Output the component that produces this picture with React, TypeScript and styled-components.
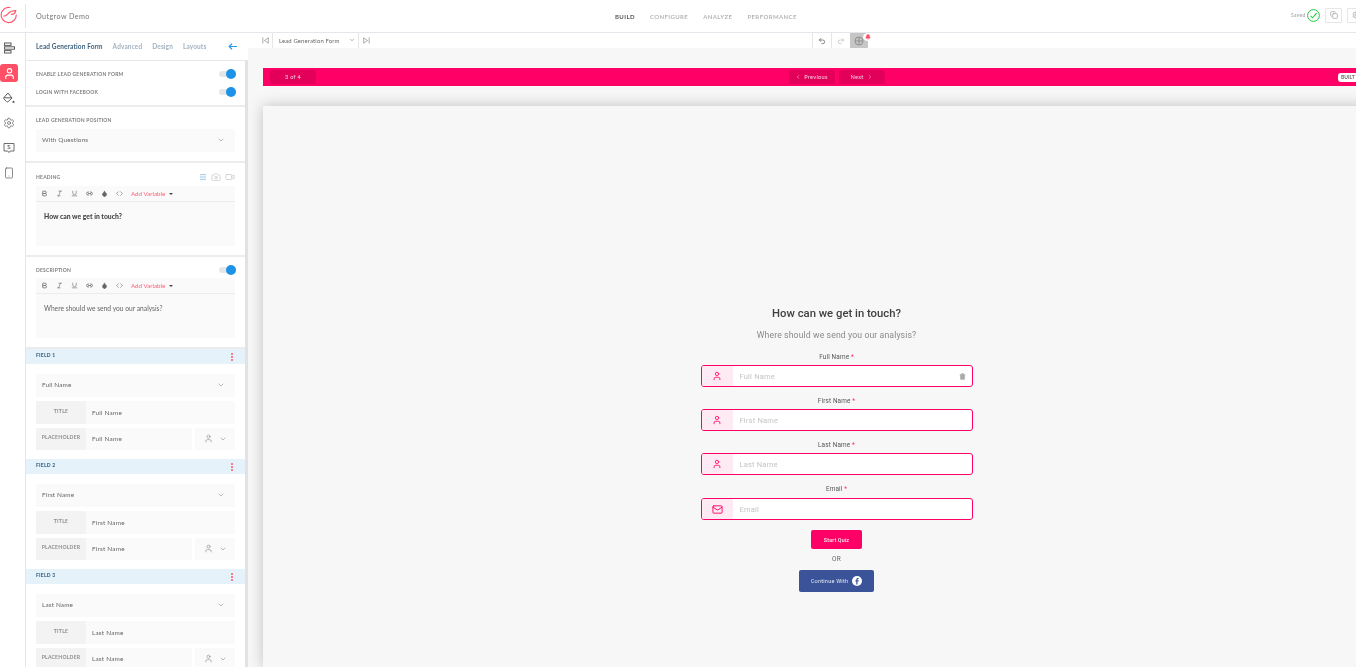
import React from "react";
import styled, { createGlobalStyle } from "styled-components";
import {
  Bell,
  Bold,
  Camera,
  ChevronDown,
  ChevronLeft,
  ChevronRight,
  Code,
  Copy,
  Droplet,
  Italic,
  Link2,
  Mail,
  Menu,
  Redo2,
  Settings,
  Smartphone,
  Trash2,
  Underline,
  Undo2,
  User,
  Video,
} from "lucide-react";

const GlobalStyle = createGlobalStyle`
  html, body {
    margin: 0;
    height: 100%;
    overflow: hidden;
    background: #fff;
    font-family: "Lato", "Liberation Sans", sans-serif;
  }
  * {
    box-sizing: border-box;
  }
`;

const Page = styled.div`
  width: 1356px;
  height: 667px;
  display: flex;
  flex-direction: column;
  overflow: hidden;
  will-change: transform;
`;

/* top header */
const Header = styled.header`
  height: 33px;
  flex: none;
  display: flex;
  align-items: center;
  background: #fff;
  border-bottom: 1px solid #e3e7ec;
`;

const Brand = styled.div`
  width: 615px;
  height: 100%;
  display: flex;
  align-items: center;
  flex: none;
`;

const LogoCell = styled.div`
  width: 26px;
  height: 24px;
  padding-bottom: 2px;
  display: flex;
  align-items: center;
  border-right: 1px solid #e6e6e6;
`;

const ProjectName = styled.span`
  margin-left: 10px;
  font-size: 7.2px;
  letter-spacing: 0.4px;
  color: #777;
`;

const Nav = styled.nav`
  display: flex;
  gap: 15px;
`;

const NavItem = styled.span<{ $active?: boolean }>`
  font-size: 6px;
  font-weight: 700;
  letter-spacing: 0.4px;
  color: ${(p) => (p.$active ? "#555" : "#b5b5b5")};
`;

const SaveArea = styled.div`
  margin-left: auto;
  margin-bottom: 2px;
  width: 65px;
  display: flex;
  align-items: center;
  overflow: hidden;
  > * {
    flex: none;
  }
  svg {
    flex: none;
  }
`;

const SavedText = styled.span`
  width: 16px;
  font-size: 5px;
  letter-spacing: 0.3px;
  color: #999;
`;

const SquareButton = styled.div`
  width: 17px;
  height: 15px;
  margin-left: 5px;
  display: flex;
  align-items: center;
  justify-content: center;
  border: 1px solid #e6e6e6;
  border-radius: 1px;
  color: #999;
`;

/* body */
const Main = styled.div`
  flex: 1;
  min-height: 0;
  display: flex;
`;

const Rail = styled.aside`
  width: 26px;
  flex: none;
  padding-top: 6px;
  display: flex;
  flex-direction: column;
  gap: 7px;
  background: #fff;
  border-right: 1px solid #e3e7ec;
`;

const RailItem = styled.div<{ $active?: boolean }>`
  width: 18px;
  height: 18px;
  display: flex;
  align-items: center;
  justify-content: center;
  border-radius: 3px;
  color: ${(p) => (p.$active ? "#fff" : "#5c5c5c")};
  background: ${(p) => (p.$active ? "#ff5066" : "transparent")};
`;

const Sidebar = styled.section`
  width: 222px;
  flex: none;
  display: flex;
  flex-direction: column;
  background: #fff;
`;

const Tabs = styled.div`
  height: 28px;
  flex: none;
  display: flex;
  align-items: center;
  padding: 0 11px 0 10px;
  gap: 10px;
  border-bottom: 1px solid #e8e8e8;
`;

const Tab = styled.span<{ $active?: boolean }>`
  font-size: 6.5px;
  font-weight: 700;
  letter-spacing: 0.12px;
  color: ${(p) => (p.$active ? "#3d6280" : "#a4b3c0")};
`;

const BackArrow = styled.span`
  margin-left: auto;
  display: flex;
  color: #2b9be8;
`;

const Panel = styled.div`
  flex: 1;
  min-height: 0;
  overflow: hidden;
  border-right: 3px solid #e2e2e2;
`;

const Section = styled.div<{ $height: number; $top?: number }>`
  height: ${(p) => p.$height}px;
  padding: ${(p) => p.$top ?? 0}px 10px 0;
  border-bottom: 2px solid #ececec;
`;

const ToggleRow = styled.div<{ $height?: number; $top?: number }>`
  height: ${(p) => p.$height ?? 18}px;
  padding-top: ${(p) => p.$top ?? 0}px;
  display: flex;
  align-items: center;
  justify-content: space-between;
`;

const SmallLabel = styled.span`
  font-size: 5px;
  font-weight: 700;
  letter-spacing: 0.2px;
  color: #808080;
`;

const ToggleTrack = styled.span`
  position: relative;
  display: block;
  width: 17px;
  height: 6px;
  margin-right: -1px;
  border-radius: 3px;
  background: #e4e7ea;
`;

const ToggleKnob = styled.span`
  position: absolute;
  right: 0;
  top: -2px;
  width: 10px;
  height: 10px;
  border-radius: 50%;
  background: #1c93e6;
`;

const Select = styled.div`
  height: 23px;
  flex: none;
  display: flex;
  align-items: center;
  justify-content: space-between;
  padding: 0 10px 2px 6px;
  background: #fafafa;
  font-size: 6.4px;
  letter-spacing: 0.15px;
  color: #666;
`;

const HeadingTools = styled.span`
  display: flex;
  align-items: center;
  gap: 4px;
  color: #ccc;
  svg:first-child {
    color: #6aa9de;
  }
`;

const EditorBar = styled.div`
  height: 16px;
  display: flex;
  align-items: center;
  gap: 8px;
  padding-left: 5px;
  background: #fafafa;
  border-bottom: 1px solid #ececec;
  color: #666;
`;

const AddVariable = styled.span`
  display: flex;
  align-items: center;
  font-size: 6.2px;
  color: #ff5f74;
`;

const Caret = styled.span`
  margin-left: 4px;
  border-left: 2px solid transparent;
  border-right: 2px solid transparent;
  border-top: 2px solid #444;
`;

const EditorBody = styled.div<{ $bold?: boolean }>`
  height: 44px;
  padding: 10px 8px;
  background: #fafafa;
  font-size: ${(p) => (p.$bold ? 6.8 : 6.7)}px;
  line-height: 9px;
  font-weight: ${(p) => (p.$bold ? 900 : 400)};
  color: ${(p) => (p.$bold ? "#444" : "#666")};
`;

const FieldHeader = styled.div`
  height: 15px;
  display: flex;
  align-items: center;
  justify-content: space-between;
  padding: 0 12px 0 10px;
  background: #e5f2fa;
  color: #ff7a8c;
`;

const FieldTitle = styled.span`
  padding-bottom: 3px;
  font-size: 5px;
  font-weight: 900;
  letter-spacing: 0.25px;
  color: #3f6a8a;
`;

const FieldBody = styled.div`
  height: 95px;
  padding: 10px 10px 0;
  display: flex;
  flex-direction: column;
  gap: 4px;
`;

const FieldRow = styled.div`
  height: 22.5px;
  flex: none;
  display: flex;
`;

const RowLabel = styled.div`
  width: 50px;
  flex: none;
  display: flex;
  align-items: center;
  justify-content: center;
  padding-bottom: 3px;
  background: #f3f3f3;
  font-size: 5.1px;
  font-weight: 700;
  letter-spacing: 0.22px;
  color: #8d8d8d;
`;

const RowValue = styled.div`
  flex: 1;
  display: flex;
  align-items: center;
  padding-left: 6px;
  background: #fafafa;
  font-size: 6.4px;
  letter-spacing: 0.2px;
  color: #666;
`;

const IconSelect = styled.div`
  width: 40px;
  flex: none;
  margin-left: 3px;
  display: flex;
  align-items: center;
  justify-content: center;
  gap: 6px;
  background: #fafafa;
  color: #999;
`;

/* right side */
const Workspace = styled.section`
  flex: 1;
  min-width: 0;
  display: flex;
  flex-direction: column;
  background: #f7f7f7;
  overflow: hidden;
`;

const Toolbar = styled.div`
  height: 15px;
  flex: none;
  display: flex;
  align-items: center;
  background: #fff;
`;

const EdgeButton = styled.div`
  width: 15px;
  height: 100%;
  flex: none;
  display: flex;
  align-items: center;
  justify-content: center;
  color: #888;
`;

const FirstEdgeButton = styled(EdgeButton)`
  width: 25px;
  padding-left: 10px;
  border-right: 1px solid #e6e6e6;
`;

const PageSelect = styled.div`
  width: 86px;
  height: 100%;
  flex: none;
  display: flex;
  align-items: center;
  justify-content: space-between;
  padding: 0 3px 1px 6px;
  border-right: 1px solid #e6e6e6;
  font-size: 5.9px;
  letter-spacing: 0.15px;
  color: #666;
`;

const HistoryGroup = styled.div`
  margin-left: 438px;
  height: 100%;
  display: flex;
`;

const HistoryButton = styled.div<{ $muted?: boolean }>`
  width: 19px;
  height: 100%;
  display: flex;
  align-items: center;
  justify-content: center;
  border-left: 1px solid #e6e6e6;
  color: ${(p) => (p.$muted ? "#bbb" : "#555")};
`;

const PreviewButton = styled.div`
  position: relative;
  width: 18px;
  height: 100%;
  display: flex;
  align-items: center;
  justify-content: center;
  background: #c6c6c6;
  color: #8a8a8a;
`;

const AlertDot = styled.span`
  position: absolute;
  top: 0;
  right: -5px;
  width: 10px;
  height: 8px;
  display: flex;
  align-items: center;
  justify-content: center;
  border-radius: 50%;
  background: #fff;
  color: #ff5066;
`;

const Canvas = styled.div`
  flex: 1;
  min-height: 0;
  padding: 20px 0 0 15px;
  display: flex;
  flex-direction: column;
  gap: 20px;
  width: 1162px;
`;

const PreviewBar = styled.div`
  height: 18px;
  flex: none;
  display: grid;
  grid-template-columns: 1fr auto 1fr;
  align-items: center;
  background: #ff0066;
`;

const BarPill = styled.div`
  width: 46px;
  height: 14px;
  padding-bottom: 1px;
  display: flex;
  align-items: center;
  justify-content: center;
  gap: 3px;
  border-radius: 3px;
  background: #e3005b;
  font-family: "Lato", sans-serif;
  font-size: 5.6px;
  letter-spacing: 0.3px;
  color: #fbd3e3;
`;

const CounterPill = styled(BarPill)`
  margin-left: 7px;
`;

const BarNav = styled.div`
  display: flex;
  gap: 4px;
`;

const BuiltBadge = styled.div`
  justify-self: end;
  width: 72px;
  height: 9px;
  padding-left: 3px;
  border-radius: 3px 0 0 3px;
  background: #fff;
  font-size: 5px;
  font-weight: 900;
  line-height: 9px;
  white-space: nowrap;
  overflow: hidden;
  color: #777;
`;

const Card = styled.div`
  flex: 1;
  min-height: 0;
  display: flex;
  flex-direction: column;
  align-items: center;
  padding-top: 200px;
  background: #f7f7f7;
  box-shadow: 0 0 14px rgba(0, 0, 0, 0.22);
  font-family: "Roboto", sans-serif;
`;

const Title = styled.h1`
  margin: 0;
  font-size: 11.3px;
  line-height: 16px;
  font-weight: 500;
  color: #404040;
`;

const Subtitle = styled.p`
  margin: 6px 0 8px;
  font-size: 8.7px;
  line-height: 14px;
  letter-spacing: 0.1px;
  color: #8a8a8a;
`;

const FormGroup = styled.div`
  width: 272px;
  margin-bottom: 7px;
  display: flex;
  flex-direction: column;
  align-items: center;
`;

const FormLabel = styled.label<{ $gap: number }>`
  padding-top: 1px;
  margin-bottom: ${(p) => p.$gap}px;
  font-size: 6.4px;
  line-height: 12px;
  letter-spacing: 0.15px;
  color: #555;
  em {
    font-style: normal;
    color: #ff2b5f;
  }
`;

const InputBox = styled.div`
  width: 100%;
  height: 22px;
  display: flex;
  align-items: center;
  overflow: hidden;
  border: 1.5px solid #ff0066;
  border-radius: 3px;
  background: #fff;
`;

const InputIcon = styled.div`
  width: 31px;
  height: 100%;
  flex: none;
  display: flex;
  align-items: center;
  justify-content: center;
  background: #fdeaf3;
  color: #ff0066;
`;

const Placeholder = styled.span`
  flex: 1;
  padding-left: 7px;
  font-size: 7.5px;
  letter-spacing: 0.2px;
  color: #c4c4c4;
`;

const TrashSlot = styled.span`
  display: flex;
  margin-right: 6px;
  color: #aaa;
`;

const StartButton = styled.button`
  width: 51px;
  height: 19px;
  margin-top: 3px;
  padding: 0;
  border: none;
  border-radius: 2px;
  background: #ff0066;
  font-family: "Roboto", sans-serif;
  font-size: 5.4px;
  font-weight: 500;
  letter-spacing: 0.15px;
  color: #ffe6ef;
`;

const OrText = styled.div`
  margin: 5px 0 6px;
  font-size: 6.5px;
  line-height: 10px;
  letter-spacing: 0.2px;
  color: #666;
`;

const FacebookButton = styled.button`
  width: 75px;
  height: 22px;
  padding: 0;
  display: flex;
  align-items: center;
  justify-content: center;
  gap: 4px;
  border: none;
  border-radius: 2px;
  background: #3b5499;
  font-family: "Roboto", sans-serif;
  font-size: 5.6px;
  letter-spacing: 0.2px;
  color: #e4e8f3;
`;

const Logo = () => (
  <svg width="18" height="18" viewBox="0 0 19 19" fill="none" stroke="#ff5a6e" strokeWidth="1.3" strokeLinecap="round">
    <path d="M10.5 1.6A8 8 0 1 0 17.2 9.5" />
    <path d="M4.2 10.8c2.4-.1 3.4-1.6 5-3.4 1.6-1.8 3.6-2.7 7.4-2.5-.4 2.4-2.4 4-4.6 4" />
  </svg>
);

const LayersIcon = () => (
  <svg width="12" height="12" viewBox="0 0 12 12" fill="none" stroke="currentColor" strokeWidth="1">
    <rect x="1.5" y="1" width="6.5" height="2.4" />
    <rect x="1.5" y="4.8" width="10" height="2.4" />
    <rect x="1.5" y="8.6" width="6.5" height="2.4" />
  </svg>
);

const BucketIcon = () => (
  <svg width="12" height="12" viewBox="0 0 12 12" fill="none" stroke="currentColor" strokeWidth="1">
    <path d="M5 1L1 5.4c-.6.7-.5 1.2 0 1.7L3.6 9.6c.5.5 1 .5 1.5 0L9 6.1 5 1z" />
    <path d="M1 5.8h8" />
    <path d="M10.5 8.4l.9 1.2a1 1 0 1 1-1.8 0z" fill="currentColor" stroke="none" />
  </svg>
);

const BillIcon = () => (
  <svg width="12" height="12" viewBox="0 0 12 12" fill="none" stroke="currentColor" strokeWidth="0.9">
    <path d="M1 1.5h10v7.5H7.2L6 10.6 4.8 9H1z" />
    <text x="6" y="7.3" fontSize="6" textAnchor="middle" fill="currentColor" stroke="none" fontFamily="Liberation Sans">
      $
    </text>
  </svg>
);

const SavedCheck = () => (
  <svg width="13" height="13" viewBox="0 0 13 13" fill="none" stroke="#27c93f" strokeWidth="1">
    <circle cx="6.5" cy="6.5" r="5.9" />
    <path d="M3.6 6.8l2 2 4-4.6" strokeWidth="1.1" />
  </svg>
);

const FacebookBadge = () => (
  <svg width="10" height="10" viewBox="0 0 10 10">
    <circle cx="5" cy="5" r="5" fill="#fff" />
    <path d="M5.5 8.4V5.5h1l.2-1.2H5.5v-.6c0-.4.1-.6.6-.6h.6v-1h-.9c-1 0-1.5.6-1.5 1.5v.7h-.9v1.2h.9v2.9z" fill="#3b5499" />
  </svg>
);

const KebabDots = () => (
  <svg width="2" height="8" viewBox="0 0 2 8" fill="currentColor">
    <rect y="0" width="2" height="2" />
    <rect y="3" width="2" height="2" />
    <rect y="6" width="2" height="2" />
  </svg>
);

const StepBack = () => (
  <svg width="7" height="7" viewBox="0 0 7 7" fill="none" stroke="currentColor" strokeWidth="0.7">
    <path d="M.8 .5v6M6.3 .8L2.4 3.5l3.9 2.7z" />
  </svg>
);

const StepForward = () => (
  <svg width="7" height="7" viewBox="0 0 7 7" fill="none" stroke="currentColor" strokeWidth="0.7">
    <path d="M6.2 .5v6M.7 .8l3.9 2.7-3.9 2.7z" />
  </svg>
);

const PreviewIcon = () => (
  <svg width="10" height="10" viewBox="0 0 10 10" fill="none" stroke="currentColor" strokeWidth="0.9">
    <circle cx="5" cy="5" r="4" />
    <path d="M5 1v8M1 5h8" />
  </svg>
);

const Toggle = () => (
  <ToggleTrack>
    <ToggleKnob />
  </ToggleTrack>
);

const EditorToolbar = () => (
  <EditorBar>
    <Bold size={7} strokeWidth={2.6} />
    <Italic size={7} />
    <Underline size={7} />
    <Link2 size={7} strokeWidth={2.6} />
    <Droplet size={7} fill="currentColor" />
    <Code size={7} />
    <AddVariable>
      Add Variable
      <Caret />
    </AddVariable>
  </EditorBar>
);

const SidebarField = ({ index, name }: { index: number; name: string }) => (
  <>
    <FieldHeader>
      <FieldTitle>FIELD {index}</FieldTitle>
      <KebabDots />
    </FieldHeader>
    <FieldBody>
      <Select>
        {name}
        <ChevronDown size={8} color="#999" />
      </Select>
      <FieldRow>
        <RowLabel>TITLE</RowLabel>
        <RowValue>{name}</RowValue>
      </FieldRow>
      <FieldRow>
        <RowLabel>PLACEHOLDER</RowLabel>
        <RowValue>{name}</RowValue>
        <IconSelect>
          <User size={9} />
          <ChevronDown size={8} />
        </IconSelect>
      </FieldRow>
    </FieldBody>
  </>
);

const fields = [
  { label: "Full Name", icon: "user", trash: true, gap: 2 },
  { label: "First Name", icon: "user", gap: 2 },
  { label: "Last Name", icon: "user", gap: 2 },
  { label: "Email", icon: "mail", gap: 3 },
];

export default function App() {
  return (
    <Page>
      <GlobalStyle />
      <Header>
        <Brand>
          <LogoCell>
            <Logo />
          </LogoCell>
          <ProjectName>Outgrow Demo</ProjectName>
        </Brand>
        <Nav>
          <NavItem $active>BUILD</NavItem>
          <NavItem>CONFIGURE</NavItem>
          <NavItem>ANALYZE</NavItem>
          <NavItem>PERFORMANCE</NavItem>
        </Nav>
        <SaveArea>
          <SavedText>Saved</SavedText>
          <SavedCheck />
          <SquareButton>
            <Copy size={8} />
          </SquareButton>
          <SquareButton>
            <Settings size={8} />
          </SquareButton>
        </SaveArea>
      </Header>
      <Main>
        <Rail>
          <RailItem>
            <LayersIcon />
          </RailItem>
          <RailItem $active>
            <User size={13} />
          </RailItem>
          <RailItem>
            <BucketIcon />
          </RailItem>
          <RailItem>
            <Settings size={12} strokeWidth={1.4} />
          </RailItem>
          <RailItem>
            <BillIcon />
          </RailItem>
          <RailItem>
            <Smartphone size={12} strokeWidth={1.4} />
          </RailItem>
        </Rail>
        <Sidebar>
          <Tabs>
            <Tab $active>Lead Generation Form</Tab>
            <Tab>Advanced</Tab>
            <Tab>Design</Tab>
            <Tab>Layouts</Tab>
            <BackArrow>
              <svg width="9" height="7" viewBox="0 0 9 7" fill="none" stroke="currentColor" strokeWidth="1.2">
                <path d="M9 3.5H1.5M4 .8L1.2 3.5 4 6.2" />
              </svg>
            </BackArrow>
          </Tabs>
          <Panel>
            <Section $height={46} $top={4}>
              <ToggleRow>
                <SmallLabel>ENABLE LEAD GENERATION FORM</SmallLabel>
                <Toggle />
              </ToggleRow>
              <ToggleRow>
                <SmallLabel>LOGIN WITH FACEBOOK</SmallLabel>
                <Toggle />
              </ToggleRow>
            </Section>
            <Section $height={56}>
              <ToggleRow $height={22} $top={3}>
                <SmallLabel>LEAD GENERATION POSITION</SmallLabel>
              </ToggleRow>
              <Select>
                With Questions
                <ChevronDown size={8} color="#999" />
              </Select>
            </Section>
            <Section $height={94}>
              <ToggleRow $height={23} $top={4}>
                <SmallLabel>HEADING</SmallLabel>
                <HeadingTools>
                  <Menu size={8} />
                  <Camera size={10} />
                  <Video size={10} />
                </HeadingTools>
              </ToggleRow>
              <EditorToolbar />
              <EditorBody $bold>How can we get in touch?</EditorBody>
            </Section>
            <Section $height={92}>
              <ToggleRow $height={21} $top={4}>
                <SmallLabel>DESCRIPTION</SmallLabel>
                <Toggle />
              </ToggleRow>
              <EditorToolbar />
              <EditorBody>Where should we send you our analysis?</EditorBody>
            </Section>
            <SidebarField index={1} name="Full Name" />
            <SidebarField index={2} name="First Name" />
            <SidebarField index={3} name="Last Name" />
          </Panel>
        </Sidebar>
        <Workspace>
          <Toolbar>
            <FirstEdgeButton>
              <StepBack />
            </FirstEdgeButton>
            <PageSelect>
              Lead Generation Form
              <ChevronDown size={6} />
            </PageSelect>
            <EdgeButton>
              <StepForward />
            </EdgeButton>
            <HistoryGroup>
              <HistoryButton>
                <Undo2 size={8} />
              </HistoryButton>
              <HistoryButton $muted>
                <Redo2 size={8} />
              </HistoryButton>
              <PreviewButton>
                <PreviewIcon />
                <AlertDot>
                  <Bell size={6} fill="currentColor" />
                </AlertDot>
              </PreviewButton>
            </HistoryGroup>
          </Toolbar>
          <Canvas>
            <PreviewBar>
              <CounterPill>3 of 4</CounterPill>
              <BarNav>
                <BarPill>
                  <ChevronLeft size={6} />
                  Previous
                </BarPill>
                <BarPill>
                  Next
                  <ChevronRight size={6} />
                </BarPill>
              </BarNav>
              <BuiltBadge>BUILT WITH OUTGROW</BuiltBadge>
            </PreviewBar>
            <Card>
              <Title>How can we get in touch?</Title>
              <Subtitle>Where should we send you our analysis?</Subtitle>
              {fields.map((f) => (
                <FormGroup key={f.label}>
                  <FormLabel $gap={f.gap}>
                    {f.label} <em>*</em>
                  </FormLabel>
                  <InputBox>
                    <InputIcon>{f.icon === "mail" ? <Mail size={11} /> : <User size={10} />}</InputIcon>
                    <Placeholder>{f.label}</Placeholder>
                    {f.trash && (
                      <TrashSlot>
                        <Trash2 size={7} fill="currentColor" />
                      </TrashSlot>
                    )}
                  </InputBox>
                </FormGroup>
              ))}
              <StartButton>Start Quiz</StartButton>
              <OrText>OR</OrText>
              <FacebookButton>
                Continue With
                <FacebookBadge />
              </FacebookButton>
            </Card>
          </Canvas>
        </Workspace>
      </Main>
    </Page>
  );
}
